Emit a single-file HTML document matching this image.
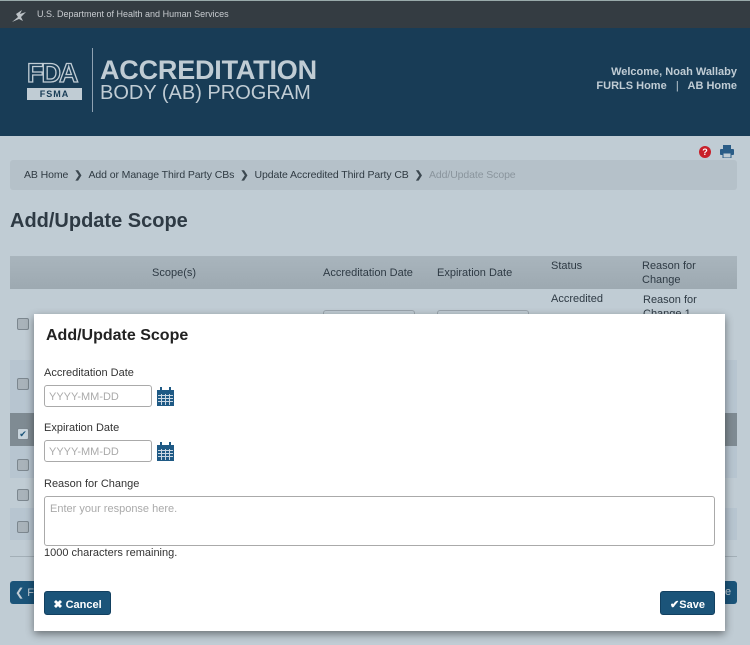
<!DOCTYPE html>
<html><head><meta charset="utf-8"><style>
*{box-sizing:border-box;margin:0;padding:0}
body{width:750px;height:645px;overflow:hidden;background:#c0ccd4;font-family:"Liberation Sans",Arial,sans-serif;position:relative;color:#333}
.top{position:absolute;left:0;top:0;width:750px;height:28px;background:#343c42;border-top:1px solid #9aa;}
.top span{position:absolute;left:37px;top:8px;font-size:9px;color:#c8ccd0}
.hdr{position:absolute;left:0;top:28px;width:750px;height:108px;background:#183c56}
.abs{position:absolute}
.bc{position:absolute;left:10px;top:160px;width:727px;height:30px;background:#b5c1c9;border-radius:3px;font-size:10.5px;color:#2f3a42;padding:9px 0 0 14px;white-space:nowrap;letter-spacing:-0.1px}
.bc .s{color:#3c4850;margin:0 6px;font-weight:bold;font-size:10px}
.bc .c{color:#8a959d}
h1{position:absolute;left:10px;top:210px;font-size:20px;color:#2e3a44;font-weight:bold}
.th{position:absolute;left:10px;top:256px;width:727px;height:33px;background:linear-gradient(#a9b5bd,#9da9b1);font-size:11px;color:#2e3a44}
.cb{position:absolute;left:17px;width:12px;height:12px;border:1px solid #7c878f;background:#a9b3ba;border-radius:2px}
.row{position:absolute;left:10px;width:727px}
.modal{position:absolute;left:34px;top:314px;width:691px;height:317px;background:#fff;box-shadow:0 3px 8px rgba(0,0,0,.45)}
.modal h2{position:absolute;left:12px;top:13px;font-size:16px;font-weight:bold;color:#222}
.lbl{position:absolute;left:10px;font-size:11px;color:#333}
.inp{position:absolute;left:10px;width:108px;height:22px;border:1px solid #aaa;border-radius:3px;font-size:11px;color:#aaa;padding:5px 0 0 4px}
.btn{position:absolute;top:277px;height:24px;background:#1b5479;border:1px solid #124060;border-radius:3px;color:#fff;font-size:11px;font-weight:bold;padding:6px 0 0 0;text-align:center}
</style></head><body>
<div class="top">
<svg class="abs" style="left:10px;top:7px" width="20" height="16" viewBox="0 0 20 16"><path d="M2 14 L8 9 L6 6 L12 2 L10 6 L16 4 L11 9 L13 13 L9 11 Z" fill="#bcc2c6"/></svg>
<span>U.S. Department of Health and Human Services</span></div>
<div class="hdr">
<div class="abs" style="left:27px;top:32px;width:55px;height:26px;font-size:27px;font-weight:bold;color:transparent;-webkit-text-stroke:1.3px #c0ccd4;letter-spacing:-2px;line-height:26px">FDA</div>
<div class="abs" style="left:27px;top:60px;width:55px;height:12px;background:#c0ccd4;color:#183c56;font-size:9px;font-weight:bold;text-align:center;line-height:12px;letter-spacing:1px">FSMA</div>
<div class="abs" style="left:92px;top:20px;width:1px;height:64px;background:#8fa2b2"></div>
<div class="abs" style="left:100px;top:28px;font-size:27px;font-weight:bold;color:#c0ccd4;line-height:28px;letter-spacing:-0.2px">ACCREDITATION</div>
<div class="abs" style="left:100px;top:54px;font-size:20px;color:#c0ccd4;letter-spacing:0;line-height:22px">BODY (AB) PROGRAM</div>
<div class="abs" style="right:13px;top:37px;font-size:11px;color:#c0ccd4;text-align:right;line-height:14px;font-weight:bold">Welcome, Noah Wallaby<br>FURLS Home &nbsp;&nbsp;<span style="font-weight:normal">|</span>&nbsp;&nbsp; AB Home</div>
</div>
<div class="abs" style="left:699px;top:146px;width:12px;height:12px;border-radius:50%;background:#c8202a;color:#fff;font-size:9px;font-weight:bold;text-align:center;line-height:12px">?</div>
<svg class="abs" style="left:720px;top:145px" width="14" height="13" viewBox="0 0 14 13"><rect x="3" y="0" width="8" height="4" fill="#2a5c86"/><rect x="0" y="4" width="14" height="6" rx="1" fill="#2a5c86"/><rect x="3" y="8" width="8" height="5" fill="#c0ccd4" stroke="#2a5c86"/></svg>
<div class="bc">AB Home<span class="s">&#x276F;</span>Add or Manage Third Party CBs<span class="s">&#x276F;</span>Update Accredited Third Party CB<span class="s">&#x276F;</span><span class="c">Add/Update Scope</span></div>
<h1>Add/Update Scope</h1>
<div class="th">
<span class="abs" style="left:142px;top:11px">Scope(s)</span>
<span class="abs" style="left:313px;top:11px">Accreditation Date</span>
<span class="abs" style="left:427px;top:11px">Expiration Date</span>
<span class="abs" style="left:541px;top:4px">Status</span>
<span class="abs" style="left:632px;top:3px;line-height:14px">Reason for<br>Change</span>
</div>
<span class="abs" style="left:551px;top:293px;font-size:11px;color:#2e3a44">Accredited</span>
<span class="abs" style="left:643px;top:293px;font-size:11px;color:#2e3a44;line-height:14px">Reason for<br>Change 1</span>
<div class="abs" style="left:323px;top:310px;width:92px;height:6px;border:1px solid #9aa5ad;border-bottom:none;border-radius:3px 3px 0 0"></div>
<div class="abs" style="left:437px;top:310px;width:92px;height:6px;border:1px solid #9aa5ad;border-bottom:none;border-radius:3px 3px 0 0"></div>
<div class="row" style="top:360px;height:53px;background:#b7c5d0"></div>
<div class="row" style="top:413px;height:33px;background:#7f8b93"></div>
<div class="row" style="top:446px;height:32px;background:#b7c5d0"></div>
<div class="row" style="top:508px;height:32px;background:#b7c5d0"></div>
<div class="row" style="top:556px;height:1px;background:#a3afb7"></div>
<div class="cb" style="top:318px"></div>
<div class="cb" style="top:378px"></div>
<div class="cb" style="top:428px;background:#c8d4dc;color:#1b5479;font-size:9px;line-height:10px;text-align:center">&#10004;</div>
<div class="cb" style="top:459px"></div>
<div class="cb" style="top:489px"></div>
<div class="cb" style="top:521px"></div>
<div class="abs" style="left:10px;top:581px;width:30px;height:23px;background:#1b5479;border-radius:3px;color:#c0ccd4;font-size:11px;padding:5px 0 0 5px">&#10094; F</div>
<div class="abs" style="left:720px;top:581px;width:17px;height:23px;background:#1b5479;border-radius:3px;color:#c0ccd4;font-size:11px;padding:5px 0 0 5px">e</div>
<div class="modal">
<h2>Add/Update Scope</h2>
<div class="lbl" style="top:53px">Accreditation Date</div>
<div class="inp" style="top:71px">YYYY-MM-DD</div>
<svg class="abs" style="left:123px;top:73px" width="17" height="19" viewBox="0 0 17 19"><rect x="0" y="3" width="17" height="16" fill="#1f5a85"/><rect x="3" y="0" width="2" height="4" fill="#1f5a85"/><rect x="12" y="0" width="2" height="4" fill="#1f5a85"/><g fill="#c9d6e2"><rect x="1" y="8" width="15" height="1"/><rect x="1" y="11" width="15" height="1"/><rect x="1" y="14" width="15" height="1"/><rect x="4" y="7" width="1" height="11"/><rect x="8" y="7" width="1" height="11"/><rect x="12" y="7" width="1" height="11"/></g></svg>
<div class="lbl" style="top:108px">Expiration Date</div>
<div class="inp" style="top:126px">YYYY-MM-DD</div>
<svg class="abs" style="left:123px;top:128px" width="17" height="19" viewBox="0 0 17 19"><rect x="0" y="3" width="17" height="16" fill="#1f5a85"/><rect x="3" y="0" width="2" height="4" fill="#1f5a85"/><rect x="12" y="0" width="2" height="4" fill="#1f5a85"/><g fill="#c9d6e2"><rect x="1" y="8" width="15" height="1"/><rect x="1" y="11" width="15" height="1"/><rect x="1" y="14" width="15" height="1"/><rect x="4" y="7" width="1" height="11"/><rect x="8" y="7" width="1" height="11"/><rect x="12" y="7" width="1" height="11"/></g></svg>
<div class="lbl" style="top:164px">Reason for Change</div>
<div class="abs" style="left:10px;top:182px;width:671px;height:50px;border:1px solid #aaa;border-radius:3px;font-size:11px;color:#aaa;padding:6px 0 0 5px">Enter your response here.</div>
<div class="lbl" style="top:233px">1000 characters remaining.</div>
<div class="btn" style="left:10px;width:67px">&#10006; Cancel</div>
<div class="btn" style="left:626px;width:55px">&#10004;&#xFE0E;Save</div>
</div>
</body></html>
